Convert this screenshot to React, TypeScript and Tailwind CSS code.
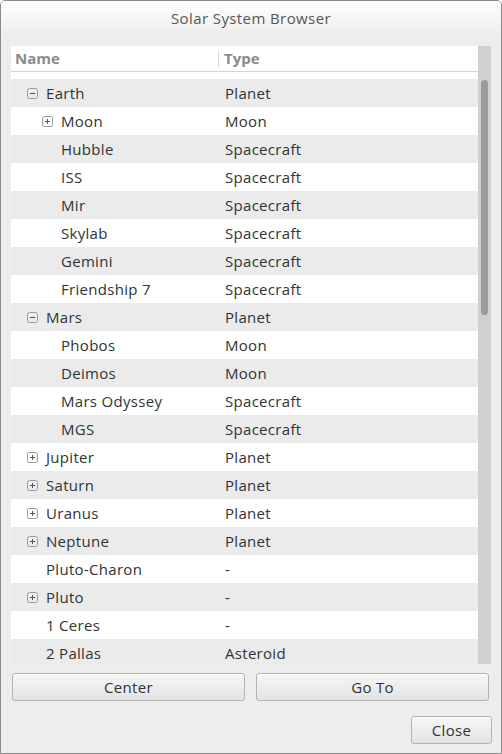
import React from "react";

type Row = { name: string; type: string; level: number; expander?: "open" | "closed" };

const rows: Row[] = [
  { name: "Earth", type: "Planet", level: 0, expander: "open" },
  { name: "Moon", type: "Moon", level: 1, expander: "closed" },
  { name: "Hubble", type: "Spacecraft", level: 1 },
  { name: "ISS", type: "Spacecraft", level: 1 },
  { name: "Mir", type: "Spacecraft", level: 1 },
  { name: "Skylab", type: "Spacecraft", level: 1 },
  { name: "Gemini", type: "Spacecraft", level: 1 },
  { name: "Friendship 7", type: "Spacecraft", level: 1 },
  { name: "Mars", type: "Planet", level: 0, expander: "open" },
  { name: "Phobos", type: "Moon", level: 1 },
  { name: "Deimos", type: "Moon", level: 1 },
  { name: "Mars Odyssey", type: "Spacecraft", level: 1 },
  { name: "MGS", type: "Spacecraft", level: 1 },
  { name: "Jupiter", type: "Planet", level: 0, expander: "closed" },
  { name: "Saturn", type: "Planet", level: 0, expander: "closed" },
  { name: "Uranus", type: "Planet", level: 0, expander: "closed" },
  { name: "Neptune", type: "Planet", level: 0, expander: "closed" },
  { name: "Pluto-Charon", type: "-", level: 0 },
  { name: "Pluto", type: "-", level: 0, expander: "closed" },
  { name: "1 Ceres", type: "-", level: 0 },
  { name: "2 Pallas", type: "Asteroid", level: 0 },
];

function Expander({ open }: { open: boolean }) {
  return (
    <svg width="11" height="11" viewBox="0 0 11 11" className="shrink-0">
      <rect x="0.5" y="0.5" width="10" height="10" rx="2" fill="none" stroke="#9a9a9a" />
      <line x1="3" y1="5.5" x2="8" y2="5.5" stroke="#555" />
      {!open && <line x1="5.5" y1="3" x2="5.5" y2="8" stroke="#555" />}
    </svg>
  );
}

function Button({ label, className }: { label: string; className: string }) {
  return (
    <button
      className={`h-[28px] rounded-[3px] border border-[#b3b3b3] bg-gradient-to-b from-[#f7f7f7] to-[#e3e3e3] text-[15px] tracking-[0.3px] text-[#2e3436] shadow-[inset_0_1px_0_#fff] ${className}`}
    >
      {label}
    </button>
  );
}

export default function App() {
  return (
    <div
      className="w-[502px] h-[754px] bg-[#ededed] border border-[#8a8a8a] rounded-t-[5px] flex flex-col overflow-hidden"
      style={{ fontFamily: '"Open Sans", "Noto Sans", sans-serif' }}
    >
      <div className="h-[35px] shrink-0 bg-gradient-to-b from-white to-[#ededed] flex items-center justify-center text-[15px] tracking-[0.4px] text-[#555753]">
        Solar System Browser
      </div>

      <div className="mt-[10px] ml-[10px] w-[480px] h-[618px] flex shrink-0">
        <div className="w-[467px] bg-white flex flex-col overflow-hidden">
          <div className="h-[26px] shrink-0 flex border-b border-[#d4d4d4] text-[15px] font-bold text-[#8a8a8a]">
            <div className="w-[208px] pl-[4px] flex items-center border-r border-[#dcdcdc] my-[4px]">Name</div>
            <div className="pl-[5px] flex items-center">Type</div>
          </div>
          <div className="h-[7px] shrink-0" />
          {rows.map((r, i) => (
            <div
              key={r.name}
              className={`h-[28px] shrink-0 flex items-center text-[15px] tracking-[0.3px] text-[#2e3436] ${i % 2 === 0 ? "bg-[#ebebeb]" : "bg-white"}`}
            >
              <div className="w-[214px] relative h-full flex items-center">
                {r.expander && (
                  <div
                    className="absolute top-[9px]"
                    style={{ left: 16 + r.level * 15 }}
                  >
                    <Expander open={r.expander === "open"} />
                  </div>
                )}
                <span style={{ marginLeft: 35 + r.level * 15 }}>{r.name}</span>
              </div>
              <span>{r.type}</span>
            </div>
          ))}
        </div>
        <div className="w-[13px] bg-[#d0d0d0] pt-[34px] pl-[3px]">
          <div className="w-[7px] h-[235px] rounded-full bg-[#9b9b9b]" />
        </div>
      </div>

      <div className="mt-[9px] ml-[11px] flex gap-[11px]">
        <Button label="Center" className="w-[233px]" />
        <Button label="Go To" className="w-[233px]" />
      </div>

      <div className="mt-[15px] flex justify-end pr-[9px]">
        <Button label="Close" className="w-[81px] h-[28px]" />
      </div>
    </div>
  );
}
